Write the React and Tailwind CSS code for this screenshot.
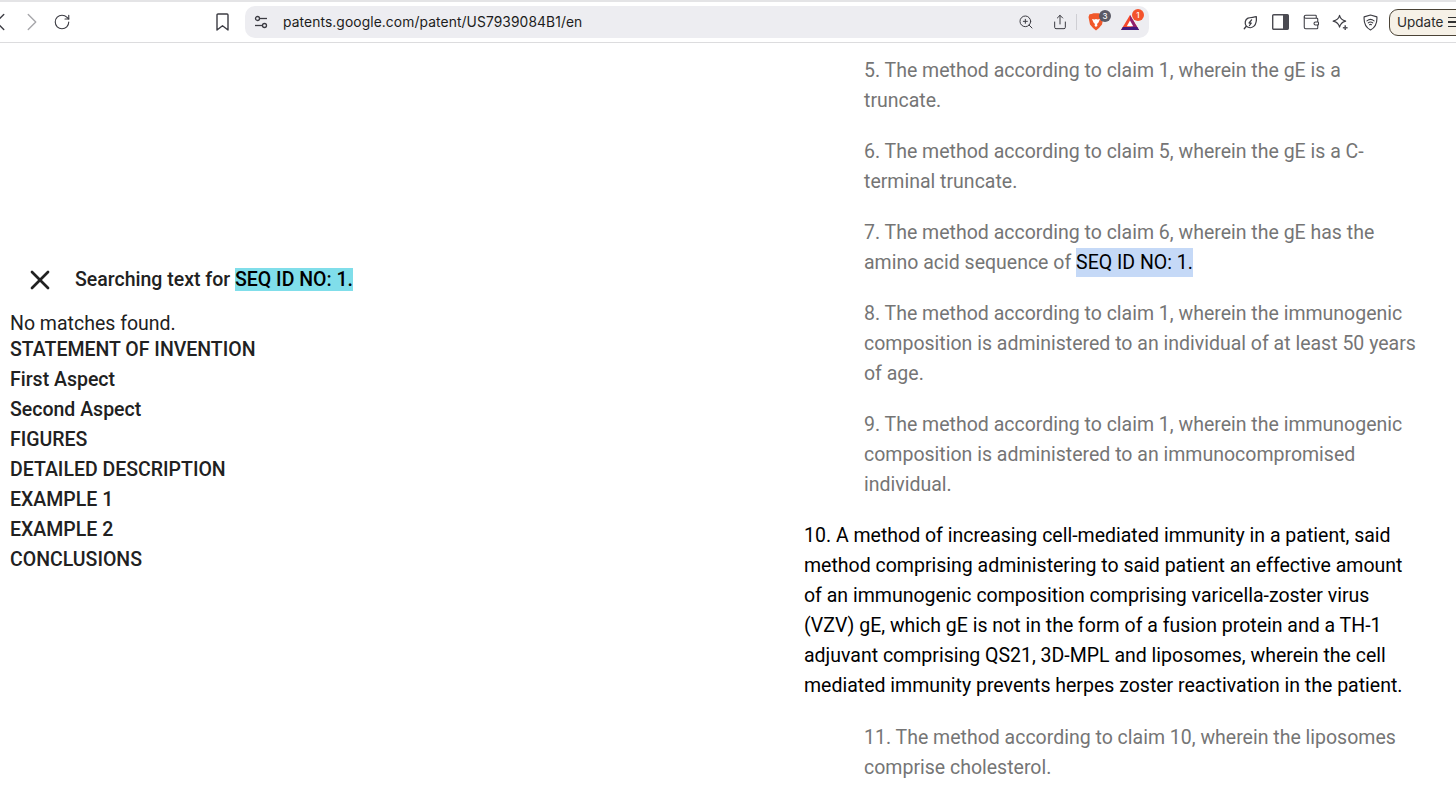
import { ChevronLeft, ChevronRight, RotateCw, ZoomIn, Share, Wallet, X } from "lucide-react";

const outline = ["STATEMENT OF INVENTION", "First Aspect", "Second Aspect", "FIGURES", "DETAILED DESCRIPTION", "EXAMPLE 1", "EXAMPLE 2", "CONCLUSIONS"];

const Claim = ({ children, main }) => (
  <p className={main ? "mb-[22px] text-black" : "mb-[21px] pl-[60px] text-[#757575]"}>{children}</p>
);

const Badge = ({ className, children }) => (
  <span className={`absolute flex items-center justify-center rounded-full text-white text-[8px] leading-none font-medium w-[12px] h-[12px] ${className}`}>
    {children}
  </span>
);

const BookmarkIcon = () => (
  <svg width="13" height="18" viewBox="0 0 13 18" fill="none" stroke="#3c3c43" strokeWidth="1.4" strokeLinejoin="round" className="shrink-0 ml-[145px]">
    <path d="M1 2C1 1.3 1.4 1 2 1H11C11.6 1 12 1.3 12 2V17L6.5 12.8L1 17Z" />
  </svg>
);

const TuneIcon = () => (
  <svg width="16" height="16" viewBox="0 0 16 16" fill="none" stroke="#3c3c43" strokeWidth="1.3" className="shrink-0">
    <circle cx="4.5" cy="4.5" r="2" />
    <path d="M6.5 4.5H14" />
    <circle cx="11.5" cy="11.5" r="2" />
    <path d="M2 11.5H9.5" />
  </svg>
);

const BraveIcon = () => (
  <svg width="16" height="18" viewBox="0 0 16 18">
    <path d="M3.5 1L5.5 0.2H10.5L12.5 1L14.5 1.2L15.5 4L15 6.5L14 11.5L11 15L8 17.5L5 15L2 11.5L1 6.5L0.5 4L1.5 1.2Z" fill="#f1582a" />
    <path d="M4 6L6.5 6.5L8 6L9.5 6.5L12 6L10.5 9.5L9 11L9.5 12.5L8 14L6.5 12.5L7 11L5.5 9.5Z" fill="#fff" />
  </svg>
);

const TriangleIcon = () => (
  <svg width="18" height="15" viewBox="0 0 18 15">
    <path d="M9 0L18 15H0Z" fill="#f4472c" />
    <path d="M9 0L18 15H12L9 8Z" fill="#8f1f6f" />
    <path d="M0 15H18L16.2 12H1.8Z" fill="#43197d" />
    <path d="M9 5.5L12.2 11.2H5.8Z" fill="#fff" />
  </svg>
);

const LeafIcon = () => (
  <svg width="15" height="15" viewBox="0 0 18 18" fill="none" stroke="#3c3c43" strokeWidth="1.5" strokeLinejoin="round" strokeLinecap="round" className="shrink-0 ml-[94px]">
    <path d="M4 13.5C1.5 10 2.5 5.5 6 3.8C9 2.4 13 3 16 2C16.3 6 16 10.5 13.5 13C11 15.5 7 15.8 4 13.5Z" />
    <path d="M1.5 16.5L4 13.5" />
    <path d="M10.3 5.8L7.3 9.6H10L7.8 12.6" />
  </svg>
);

const SidebarIcon = () => (
  <svg width="17" height="16" viewBox="0 0 17 16" className="shrink-0 ml-[14px]">
    <rect x="0.7" y="0.7" width="15.6" height="14.6" rx="1" fill="#fff" stroke="#4b4b52" strokeWidth="1.4" />
    <rect x="11" y="0.7" width="5.3" height="14.6" fill="#4b4b52" />
  </svg>
);

const SparkleIcon = () => (
  <svg width="17" height="17" viewBox="0 0 18 18" fill="none" stroke="#3c3c43" strokeWidth="1.2" strokeLinejoin="round" className="shrink-0 ml-[12px]">
    <path d="M8 1.5C8.8 5 10.5 6.8 14.5 7.5C10.5 8.4 8.9 10.2 8 14C7.2 10.2 5.4 8.4 1.2 7.5C5.4 6.8 7.2 5 8 1.5Z" />
    <path d="M14 12V17M11.5 14.5H16.5" strokeWidth="1.6" stroke="#55555c" />
  </svg>
);

const ShieldIcon = () => (
  <svg width="15" height="17" viewBox="0 0 16 18" fill="none" stroke="#3c3c43" strokeWidth="1.2" strokeLinecap="round" className="shrink-0 ml-[14px]">
    <path d="M8 1L14.8 3C15.2 8.5 13.8 14 8 17C2.2 14 0.8 8.5 1.2 3Z" strokeLinejoin="round" />
    <path d="M4.2 7.2C6.4 5.4 9.6 5.4 11.8 7.2M5.6 9.4C7 8.3 9 8.3 10.4 9.4M7 11.4C7.6 11 8.4 11 9 11.4" />
  </svg>
);

const Toolbar = () => (
  <header className="shrink-0 h-[43px] bg-white border-t-2 border-t-[#e4e4e6] border-b border-b-[#dcdcde] flex items-center overflow-hidden font-[Inter,sans-serif]">
    <ChevronLeft size={30} strokeWidth={1.1} className="shrink-0 text-[#3c3c43] -ml-[15px]" />
    <ChevronRight size={30} strokeWidth={1.1} className="shrink-0 text-[#a6a6aa] ml-[2px]" />
    <RotateCw size={18} strokeWidth={1.5} className="shrink-0 text-[#3c3c43] ml-[6px]" />
    <BookmarkIcon />
    <div className="shrink-0 ml-[16px] w-[904px] h-[32px] rounded-[10px] bg-[#ededf1] flex items-center pl-[8px] pr-[10px]">
      <TuneIcon />
      <span className="ml-[14px] text-[13.8px] tracking-[0.1px] text-[#1c1c20]">patents.google.com/patent/US7939084B1/en</span>
      <ZoomIn size={16} strokeWidth={1.5} className="shrink-0 ml-auto text-[#3c3c43]" />
      <Share size={16} strokeWidth={1.5} className="shrink-0 ml-[18px] text-[#3c3c43]" />
      <div className="shrink-0 ml-[8px] w-px h-[16px] bg-[#cfcfd4]" />
      <div className="relative shrink-0 ml-[11px] flex">
        <BraveIcon />
        <Badge className="-top-[3px] left-[11px] bg-[#5a5a66]">3</Badge>
      </div>
      <div className="relative shrink-0 ml-[17px] flex">
        <TriangleIcon />
        <Badge className="-top-[6px] left-[11px] bg-[#f4532c]">1</Badge>
      </div>
    </div>
    <LeafIcon />
    <SidebarIcon />
    <Wallet size={18} strokeWidth={1.4} className="shrink-0 ml-[13px] text-[#3c3c43]" />
    <SparkleIcon />
    <ShieldIcon />
    <div className="ml-[11px] h-[27px] w-[80px] shrink-0 rounded-l-[9px] border border-[#4a4336] bg-[#f6f1e7] flex items-center pl-[7px]">
      <span className="text-[13.5px] text-[#2b2b2b]">Update</span>
      <div className="ml-[5px] w-[14px] flex flex-col gap-[3px]">
        <div className="h-[1.5px] bg-[#333]" />
        <div className="h-[1.5px] bg-[#333]" />
        <div className="h-[1.5px] bg-[#333]" />
      </div>
    </div>
  </header>
);

const App = () => (
  <div className="h-[802px] w-[1456px] overflow-hidden bg-white flex flex-col text-[19.5px] leading-[30px] font-[Roboto,sans-serif]">
    <Toolbar />
    <main className="flex flex-1 overflow-hidden">
      <aside className="w-[804px] shrink-0 pl-[10px] pt-[221px]">
        <div className="flex items-center font-medium text-[#212121]">
          <X size={32} strokeWidth={2} className="ml-[14px] text-[#212121]" />
          <div className="ml-[19px]">
            Searching text for <span className="bg-[#80deea] text-black">SEQ ID NO: 1.</span>
          </div>
        </div>
        <div className="mt-[13px] -mb-[4px] text-[#212121]">No matches found.</div>
        {outline.map((item) => (
          <div key={item} className="font-medium text-[#212121]">{item}</div>
        ))}
      </aside>
      <section className="w-[616px] pt-[13px]">
        <Claim>5. The method according to claim 1, wherein the gE is a truncate.</Claim>
        <Claim>6. The method according to claim 5, wherein the gE is a C-terminal truncate.</Claim>
        <Claim>7. The method according to claim 6, wherein the gE has the amino acid sequence of <span className="bg-[#c5d9f7] py-[3px] text-black">SEQ ID NO: 1.</span></Claim>
        <Claim>8. The method according to claim 1, wherein the immunogenic composition is administered to an individual of at least 50 years of age.</Claim>
        <Claim>9. The method according to claim 1, wherein the immunogenic composition is administered to an immunocompromised individual.</Claim>
        <Claim main>10. A method of increasing cell-mediated immunity in a patient, said method comprising administering to said patient an effective amount of an immunogenic composition comprising varicella-zoster virus (VZV) gE, which gE is not in the form of a fusion protein and a TH-1 adjuvant comprising QS21, 3D-MPL and liposomes, wherein the cell mediated immunity prevents herpes zoster reactivation in the patient.</Claim>
        <Claim>11. The method according to claim 10, wherein the liposomes comprise cholesterol.</Claim>
      </section>
    </main>
  </div>
);

export default App;
